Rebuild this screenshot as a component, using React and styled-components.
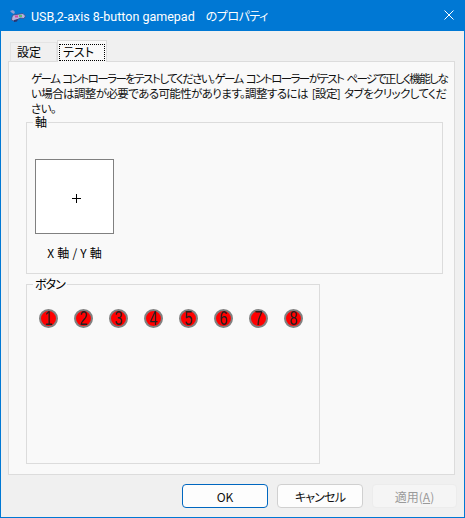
import React from "react";
import styled, { createGlobalStyle } from "styled-components";

const Global = createGlobalStyle`
  html, body { margin: 0; padding: 0; background: #f0f0f0; }
  #root { width: 465px; height: 518px; }
  * { box-sizing: border-box; }
`;

const FONT = `"Noto Sans CJK JP", "Noto Sans", sans-serif`;

const Window = styled.div`
  width: 465px;
  height: 518px;
  display: flex;
  flex-direction: column;
  background: #f0f0f0;
  border: 1px solid #0078d4;
  border-top: 0;
  font-family: ${FONT};
  font-size: 12px;
  font-feature-settings: "palt";
  color: #000;
  overflow: hidden;
`;

const TitleBar = styled.div`
  height: 31px;
  flex: none;
  margin: 0 -1px;
  background: #0078d4;
  color: #fff;
  display: flex;
  align-items: center;
  padding: 0 11px 0 9px;
`;

const TitleIcon = styled.svg`
  width: 17px;
  height: 14px;
  flex: none;
  margin-right: 5px;
`;

const TitleText = styled.div`
  flex: 1;
  font-family: Roboto, ${FONT};
  font-size: 12.5px;
  white-space: nowrap;
  margin-top: -1px;
`;

const TitleSuffix = styled.span`
  font-family: ${FONT};
  font-size: 12px;
  letter-spacing: -0.5px;
  margin-left: 11px;
`;

const CloseIcon = styled.svg`
  width: 10px;
  height: 10px;
  margin-top: -1px;
`;

const TabRow = styled.div`
  display: flex;
  height: 22px;
  margin: 9px 0 0 9px;
  flex: none;
  position: relative;
  z-index: 1;
`;

const Tab = styled.div`
  width: ${(p) => p.$w}px;
  height: ${(p) => (p.$active ? 22 : 20)}px;
  margin-top: ${(p) => (p.$active ? 0 : 2)}px;
  background: ${(p) => (p.$active ? "#f9f9f9" : "#f0f0f0")};
  border: 1px solid ${(p) => (p.$active ? "#dcdcdc" : "#e4e4e4")};
  border-bottom: ${(p) => (p.$active ? "0" : "1px solid #dcdcdc")};
  padding: ${(p) => (p.$active ? "3px 1px 0" : "0 0 0 6px")};
  line-height: 18px;
`;

const Focus = styled.div`
  height: 17px;
  border: 1px dotted #000;
  padding-left: 3px;
  line-height: 14px;
`;

const Panel = styled.div`
  flex: none;
  width: 447px;
  height: 414px;
  margin: -1px 0 0 7px;
  background: #f9f9f9;
  border: 1px solid #dcdcdc;
  padding: 9px 12px 0 17px;
`;

const Intro = styled.div`
  padding-left: 5px;
  height: 44px;
  font-size: 11.5px;
  line-height: 15px;
  color: #111;
  white-space: nowrap;
`;

const IntroLine = styled.div`
  letter-spacing: ${(p) => p.$ls}px;
  word-spacing: 2px;
`;

const Group = styled.fieldset`
  margin: 0;
  padding: 0;
  width: ${(p) => p.$w}px;
  height: ${(p) => p.$h}px;
  border: 1px solid #dcdcdc;
  min-inline-size: 0;
`;

const GroupTitle = styled.legend`
  margin-left: 6px;
  padding: 0 2px;
  font-size: 12px;
  letter-spacing: -1px;
  line-height: 14px;
  height: 14px;
`;

const AxisArea = styled.div`
  display: flex;
  flex-direction: column;
  align-items: flex-start;
  padding: 30px 0 0 8px;
`;

const Plot = styled.div`
  width: 79px;
  height: 75px;
  background: #fff;
  border: 1px solid #808080;
  padding: 3px 0 0 3px;
  display: flex;
  align-items: center;
  justify-content: center;
`;

const CrossIcon = styled.svg`
  width: 9px;
  height: 9px;
`;

const AxisLabel = styled.div`
  width: 79px;
  margin-top: 11px;
  text-align: center;
  line-height: 15px;
  font-size: 12px;
  word-spacing: 0.5px;
  white-space: nowrap;
`;

const ButtonsGroup = styled(Group)`
  margin-top: 3px;
`;

const Lamps = styled.div`
  display: flex;
  gap: 16px;
  padding: 18px 0 0 12px;
`;

const Lamp = styled.div`
  width: 19px;
  height: 19px;
  border-radius: 50%;
  background: #ff0000;
  border: 2px solid #808080;
  display: flex;
  align-items: center;
  justify-content: center;
  font-family: "Liberation Sans", sans-serif;
  font-size: 20px;
  line-height: 15px;
  color: #222;
  span {
    display: block;
    transform: scaleX(0.72);
  }
`;

const Footer = styled.div`
  flex: 1;
  display: flex;
  justify-content: flex-end;
  gap: 9px;
  padding: 9px 7px 0 0;
`;

const DialogButton = styled.div`
  width: ${(p) => p.$w || 86}px;
  height: 24px;
  border-radius: 4px;
  display: flex;
  align-items: center;
  justify-content: center;
  font-size: 12px;
  letter-spacing: ${(p) => p.$tight || 0}px;
  background: ${(p) => (p.$disabled ? "#f5f5f5" : "#fdfdfd")};
  color: ${(p) => (p.$disabled ? "#9a9a9a" : "#111")};
  border: ${(p) =>
    p.$primary
      ? "1px solid #0067c0"
      : p.$disabled
      ? "1px solid #ececec"
      : "1px solid #d0d0d0"};
  u { text-underline-offset: 1px; }
`;

const Gamepad = () => (
  <TitleIcon viewBox="0 0 17 14">
    <path d="M1 2 L4 1 L6 3 L5 5 L3 4 Z" fill="#8f9bd0" />
    <path d="M4 6 L14 4.5 L16.5 7 L15 9.5 L11 9 L8 11 L5 12 L2.5 11 L3 8 Z" fill="#b7b2dc" stroke="#3c4a86" strokeWidth="0.8" />
    <rect x="6" y="6.5" width="3" height="2" fill="#d04aa0" />
    <rect x="10" y="6" width="3" height="2" fill="#5ec06a" />
    <path d="M5 11 L9 10 L8 12.5 L5 13 Z" fill="#2b3570" />
  </TitleIcon>
);

export default function App() {
  return (
    <>
      <Global />
      <Window>
        <TitleBar>
          <Gamepad />
          <TitleText>
            USB,2-axis 8-button gamepad<TitleSuffix>のプロパティ</TitleSuffix>
          </TitleText>
          <CloseIcon viewBox="0 0 10 10">
            <path d="M0.5 0.5 L9.5 9.5 M9.5 0.5 L0.5 9.5" stroke="#fff" strokeWidth="1" fill="none" />
          </CloseIcon>
        </TitleBar>
        <TabRow>
          <Tab $w={47}>設定</Tab>
          <Tab $w={50} $active>
            <Focus>テスト</Focus>
          </Tab>
        </TabRow>
        <Panel>
          <Intro>
            <IntroLine $ls={-1.55}>ゲーム コントローラーをテストしてください。ゲーム コントローラーがテスト ページで正しく機能しな</IntroLine>
            <IntroLine $ls={-0.6}>い場合は調整が必要である可能性があります。調整するには [設定] タブをクリックしてくだ</IntroLine>
            <IntroLine $ls={-0.6}>さい。</IntroLine>
          </Intro>
          <Group $w={417} $h={159}>
            <GroupTitle>軸</GroupTitle>
            <AxisArea>
              <Plot>
                <CrossIcon viewBox="0 0 9 9">
                  <path d="M4.5 0 V9 M0 4.5 H9" stroke="#000" strokeWidth="1" fill="none" />
                </CrossIcon>
              </Plot>
              <AxisLabel>X 軸 / Y 軸</AxisLabel>
            </AxisArea>
          </Group>
          <ButtonsGroup $w={294} $h={187}>
            <GroupTitle>ボタン</GroupTitle>
            <Lamps>
              {[1, 2, 3, 4, 5, 6, 7, 8].map((n) => (
                <Lamp key={n}><span>{n}</span></Lamp>
              ))}
            </Lamps>
          </ButtonsGroup>
        </Panel>
        <Footer>
          <DialogButton $primary>OK</DialogButton>
          <DialogButton $tight={-0.8}>キャンセル</DialogButton>
          <DialogButton $disabled $w={85}>適用(<u>A</u>)</DialogButton>
        </Footer>
      </Window>
    </>
  );
}
